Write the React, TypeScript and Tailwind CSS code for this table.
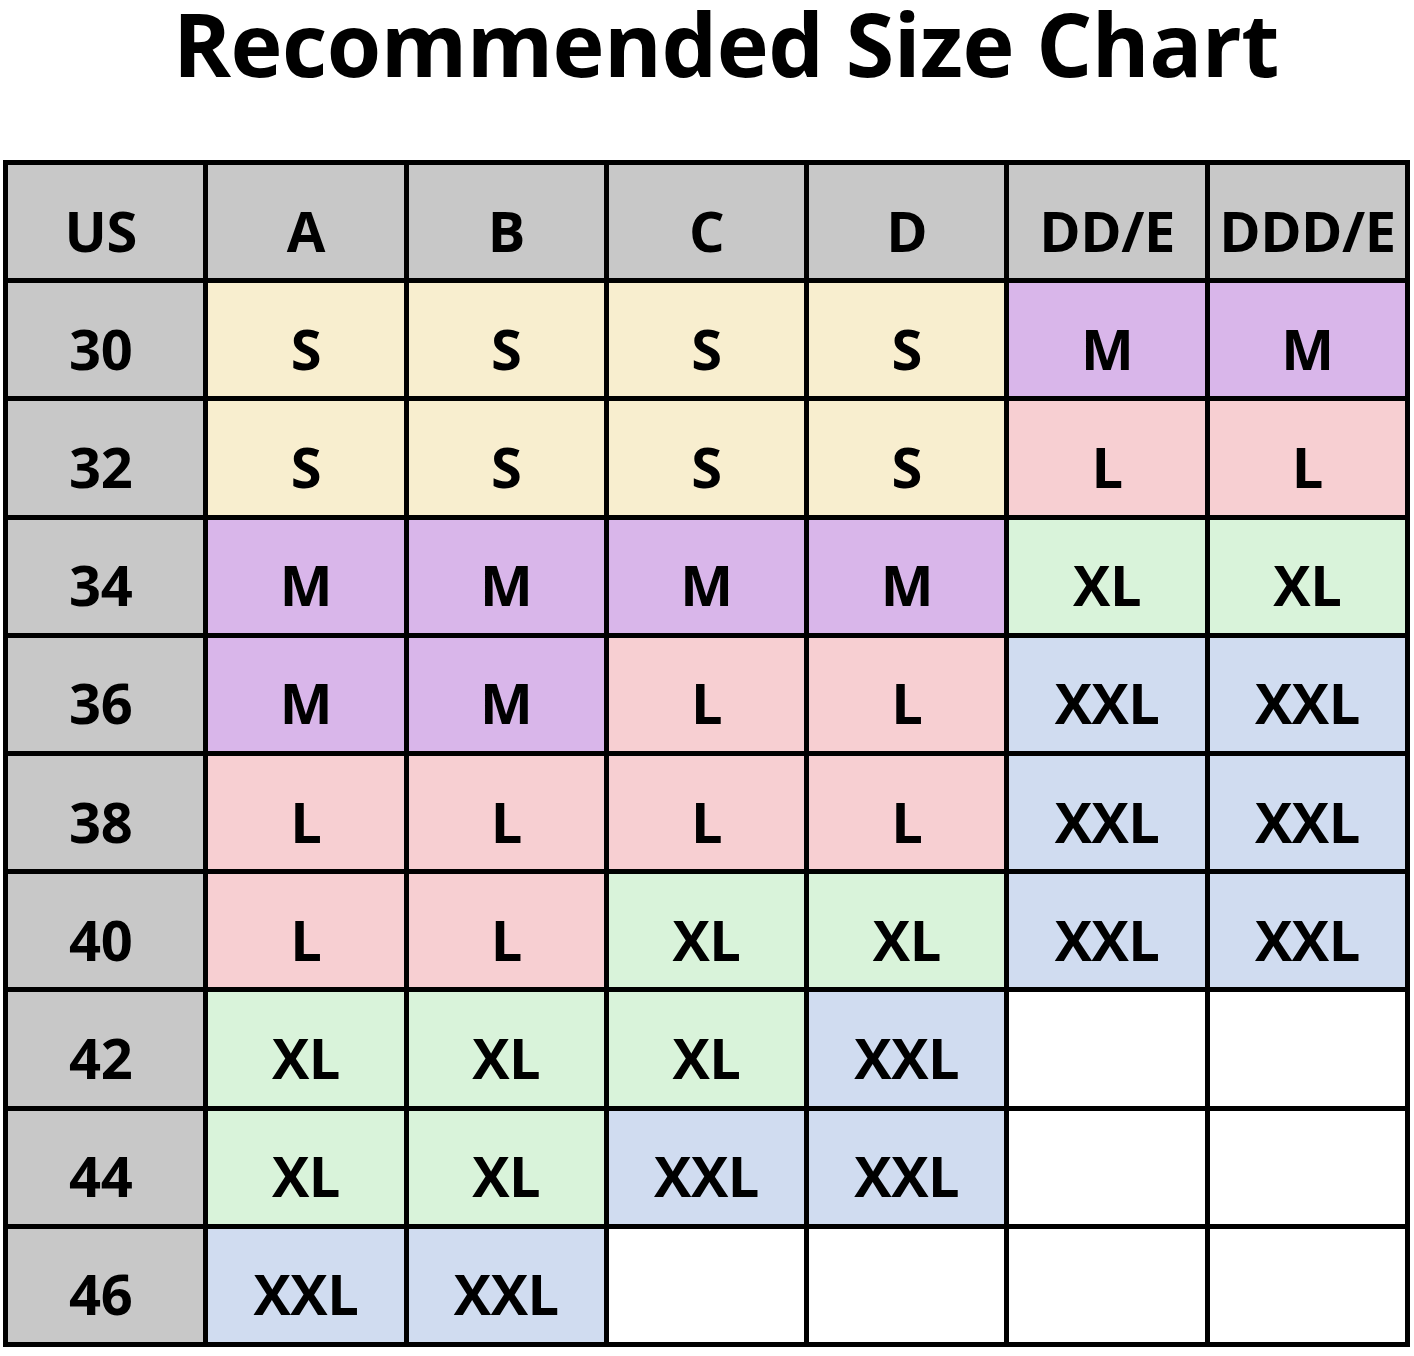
import React from 'react';

const cols = ['US', 'A', 'B', 'C', 'D', 'DD/E', 'DDD/E'];

const rows: [string, string[]][] = [
  ['30', ['S', 'S', 'S', 'S', 'M', 'M']],
  ['32', ['S', 'S', 'S', 'S', 'L', 'L']],
  ['34', ['M', 'M', 'M', 'M', 'XL', 'XL']],
  ['36', ['M', 'M', 'L', 'L', 'XXL', 'XXL']],
  ['38', ['L', 'L', 'L', 'L', 'XXL', 'XXL']],
  ['40', ['L', 'L', 'XL', 'XL', 'XXL', 'XXL']],
  ['42', ['XL', 'XL', 'XL', 'XXL', '', '']],
  ['44', ['XL', 'XL', 'XXL', 'XXL', '', '']],
  ['46', ['XXL', 'XXL', '', '', '', '']],
];

const sizeBg: Record<string, string> = {
  S: 'bg-[#f8eecf]',
  M: 'bg-[#d9b6ea]',
  L: 'bg-[#f7cfd2]',
  XL: 'bg-[#d9f3da]',
  XXL: 'bg-[#d0dcf0]',
  '': 'bg-white',
};

function Cell({ text, bg, first }: { text: string; bg: string; first?: boolean }) {
  return (
    <div
      className={`${bg} ${first ? 'pr-[10px]' : ''} flex items-center justify-center pt-4 text-[56px] font-bold leading-none text-black tracking-[-0.5px]`}
    >
      {text}
    </div>
  );
}

export default function App() {
  return (
    <div className="w-[1414px] h-[1356px] bg-white font-['Open_Sans',sans-serif]">
      {/* Title */}
      <div className="h-[160px] pt-[1px] pl-[38px]">
        <h1 className="text-center text-[88px] font-bold leading-[84px] text-black tracking-[-0.5px]">
          Recommended Size Chart
        </h1>
      </div>

      {/* Chart */}
      <div className="ml-[3px] w-[1407px] h-[1187px] bg-black p-[5px] grid grid-cols-7 grid-rows-10 gap-[5px]">
        {cols.map((c, i) => (
          <Cell key={c} text={c} bg="bg-[#c8c8c8]" first={i === 0} />
        ))}
        {rows.map(([band, sizes]) => (
          <React.Fragment key={band}>
            <Cell text={band} bg="bg-[#c8c8c8]" first />
            {sizes.map((s, i) => (
              <Cell key={i} text={s} bg={sizeBg[s]} />
            ))}
          </React.Fragment>
        ))}
      </div>
    </div>
  );
}
